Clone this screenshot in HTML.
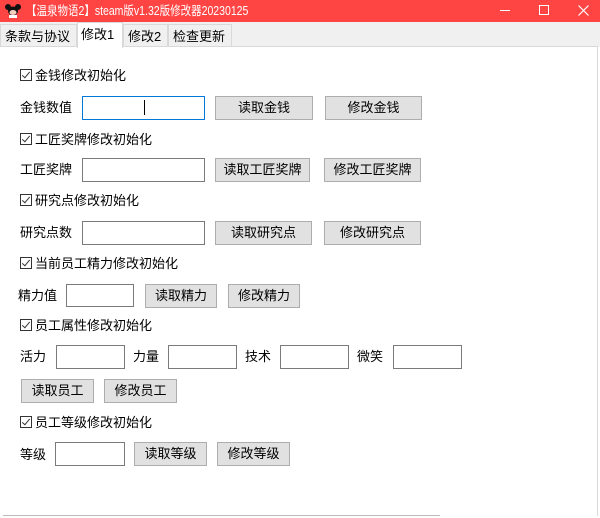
<!DOCTYPE html>
<html><head><meta charset="utf-8"><style>
*{margin:0;padding:0;box-sizing:border-box}
body{width:600px;height:518px;overflow:hidden;background:#fff;font-family:"Liberation Sans","Noto Sans CJK SC","Microsoft YaHei",sans-serif;font-size:13px;color:#000;position:relative}
.a{position:absolute;white-space:nowrap}
.t{line-height:16px}
.in{position:absolute;border:1px solid #7a7a7a;background:#fff}
.b{position:absolute;border:1px solid #adadad;background:#e1e1e1;text-align:center;font-size:13px}
.cb{display:inline-block;width:12px;height:12px;border:1px solid #333;vertical-align:-1px;margin-right:3px;position:relative}
.cb:after{content:"";position:absolute;left:3px;top:0px;width:3px;height:7px;border:solid #333;border-width:0 1.3px 1.3px 0;transform:rotate(40deg)}
</style></head><body>
<div class="a" style="left:0;top:0;width:600px;height:22px;background:#ff4444"></div>
<svg class="a" style="left:5px;top:3px" width="16" height="16" viewBox="0 0 16 16"><circle cx="3" cy="4" r="3" fill="#111"/><circle cx="13" cy="4" r="3" fill="#111"/><ellipse cx="8" cy="8" rx="5" ry="4.5" fill="#111"/><ellipse cx="8" cy="9.5" rx="3.5" ry="2.5" fill="#f3d0c0"/><rect x="4" y="12" width="8" height="3" fill="#fff"/></svg>
<div class="a t" style="left:26px;top:3px;color:#fff;font-size:12.5px;transform:scaleX(0.84);transform-origin:0 0">【温泉物语2】steam版v1.32版修改器20230125</div>
<div class="a" style="left:500px;top:10px;width:10px;height:1px;background:#fff"></div>
<div class="a" style="left:539px;top:5px;width:10px;height:10px;border:1px solid #fff"></div>
<svg class="a" style="left:578px;top:5px" width="11" height="11" viewBox="0 0 11 11"><path d="M0.5 0.5L10.5 10.5M10.5 0.5L0.5 10.5" stroke="#fff" stroke-width="1.2"/></svg>
<div class="a" style="left:0;top:22px;width:600px;height:25px;background:#f0f0f0"></div>
<div class="a" style="left:0;top:46px;width:598px;height:1px;background:#d9d9d9"></div>
<div class="a" style="left:0;top:24px;width:77px;height:23px;border:1px solid #d9d9d9;border-bottom:none"></div>
<div class="a t" style="left:5px;top:29px">条款与协议</div>
<div class="a" style="left:77px;top:22px;width:46px;height:26px;background:#fff;border:1px solid #d9d9d9;border-bottom:none"></div>
<div class="a t" style="left:81px;top:27px">修改1</div>
<div class="a" style="left:123px;top:24px;width:45px;height:23px;border:1px solid #d9d9d9;border-bottom:none"></div>
<div class="a t" style="left:128px;top:29px">修改2</div>
<div class="a" style="left:168px;top:24px;width:64px;height:23px;border:1px solid #d9d9d9;border-bottom:none"></div>
<div class="a t" style="left:173px;top:29px">检查更新</div>
<div class="a" style="left:597px;top:47px;width:1px;height:469px;background:#d9d9d9"></div>
<div class="a" style="left:3px;top:515px;width:437px;height:1px;background:#bbb"></div>

<div class="a t" style="left:20px;top:68px"><span class="cb"></span>金钱修改初始化</div>
<div class="a t" style="left:20px;top:100px">金钱数值</div>
<div class="in" style="left:82px;top:96px;width:123px;height:24px;border-color:#0078d7"></div>
<div class="a" style="left:144px;top:100px;width:1px;height:15px;background:#000"></div>
<div class="b" style="left:215px;top:96px;width:98px;height:24px;line-height:22px">读取金钱</div>
<div class="b" style="left:325px;top:96px;width:97px;height:24px;line-height:22px">修改金钱</div>

<div class="a t" style="left:20px;top:132px"><span class="cb"></span>工匠奖牌修改初始化</div>
<div class="a t" style="left:20px;top:162px">工匠奖牌</div>
<div class="in" style="left:82px;top:158px;width:123px;height:24px"></div>
<div class="b" style="left:215px;top:158px;width:95px;height:24px;line-height:22px">读取工匠奖牌</div>
<div class="b" style="left:324px;top:158px;width:97px;height:24px;line-height:22px">修改工匠奖牌</div>

<div class="a t" style="left:20px;top:193px"><span class="cb"></span>研究点修改初始化</div>
<div class="a t" style="left:20px;top:225px">研究点数</div>
<div class="in" style="left:82px;top:221px;width:123px;height:24px"></div>
<div class="b" style="left:215px;top:221px;width:97px;height:24px;line-height:22px">读取研究点</div>
<div class="b" style="left:324px;top:221px;width:97px;height:24px;line-height:22px">修改研究点</div>

<div class="a t" style="left:20px;top:256px"><span class="cb"></span>当前员工精力修改初始化</div>
<div class="a t" style="left:18px;top:288px">精力值</div>
<div class="in" style="left:66px;top:284px;width:68px;height:23px"></div>
<div class="b" style="left:145px;top:284px;width:72px;height:24px;line-height:22px">读取精力</div>
<div class="b" style="left:228px;top:284px;width:72px;height:24px;line-height:22px">修改精力</div>

<div class="a t" style="left:20px;top:318px"><span class="cb"></span>员工属性修改初始化</div>
<div class="a t" style="left:20px;top:349px">活力</div>
<div class="in" style="left:56px;top:345px;width:69px;height:24px"></div>
<div class="a t" style="left:133px;top:349px">力量</div>
<div class="in" style="left:168px;top:345px;width:69px;height:24px"></div>
<div class="a t" style="left:245px;top:349px">技术</div>
<div class="in" style="left:280px;top:345px;width:69px;height:24px"></div>
<div class="a t" style="left:357px;top:349px">微笑</div>
<div class="in" style="left:393px;top:345px;width:69px;height:24px"></div>
<div class="b" style="left:21px;top:379px;width:73px;height:24px;line-height:22px">读取员工</div>
<div class="b" style="left:104px;top:379px;width:73px;height:24px;line-height:22px">修改员工</div>

<div class="a t" style="left:20px;top:415px"><span class="cb"></span>员工等级修改初始化</div>
<div class="a t" style="left:20px;top:447px">等级</div>
<div class="in" style="left:55px;top:442px;width:70px;height:24px"></div>
<div class="b" style="left:134px;top:442px;width:73px;height:24px;line-height:22px">读取等级</div>
<div class="b" style="left:217px;top:442px;width:73px;height:24px;line-height:22px">修改等级</div>
</body></html>
